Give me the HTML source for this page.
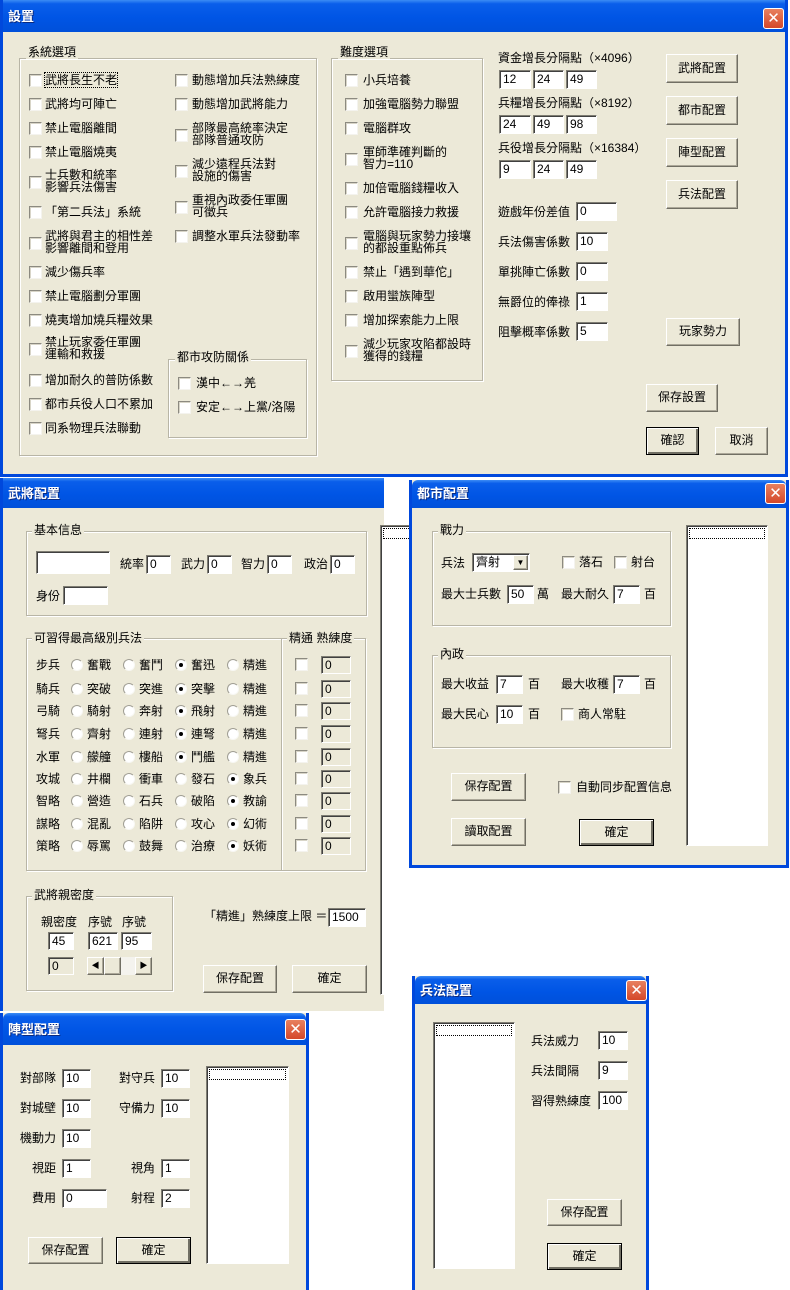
<!DOCTYPE html>
<html><head><meta charset="utf-8">
<style>
*{margin:0;padding:0;box-sizing:border-box}
body{width:790px;height:1290px;background:#fff;position:relative;overflow:hidden;font:12px "Liberation Sans","Noto Sans CJK TC","WenQuanYi Zen Hei",sans-serif;color:#000}
div,span{position:absolute}
.dlg{background:#ECE9D8;border:3px solid #0048DC;border-top:none}
.tb{left:0;right:0;top:0;background:linear-gradient(#3C8CF4 0,#0A5EEA 12%,#0055E5 55%,#0050DA 100%);color:#fff;font-weight:bold;font-size:13px;padding:0 0 0 5px;text-shadow:1px 1px #0A2A80}
.cl{width:21px;height:21px;background:linear-gradient(#E8805F,#D4482A);border:1px solid #fff;border-radius:3px;color:#fff;font:bold 15px/18px "DejaVu Sans",sans-serif;text-align:center}
.t{white-space:nowrap;line-height:14px}
.t2{white-space:nowrap;line-height:12px}
.cb{width:13px;height:13px;background:#fff;border:1px solid;border-color:#8C8A80 #F4F3EE #F4F3EE #8C8A80;box-shadow:inset 1px 1px #D8D5C8}
.in{height:19px;background:#fff;border:1px solid;border-color:#7F7D73 #fff #fff #7F7D73;box-shadow:inset 1px 1px #404040;font-size:12px;line-height:16px;padding-left:3px}
.dis{background:#ECE9D8}
.bt{background:#ECE9D8;border:1px solid;border-color:#fff #716F64 #716F64 #fff;box-shadow:inset -1px -1px #ACA899;text-align:center;line-height:25px}
.df{border:1px solid #000;box-shadow:inset 1px 1px #fff,inset -2px -2px #716F64}
.gb{border:1px solid #B8B5A6;box-shadow:1px 1px 0 #fff,inset 1px 1px 0 #fff}
.gl{background:#ECE9D8;padding:0 2px;line-height:14px;white-space:nowrap}
.rd{width:12px;height:12px;border-radius:50%;background:#fff;border:1px solid;border-color:#A09E94 #F8F8F4 #F8F8F4 #A09E94}
.rd.on::after{content:"";position:absolute;left:3px;top:3px;width:4px;height:4px;border-radius:50%;background:#000}
.lb{background:#fff;border:1px solid;border-color:#7F7D73 #fff #fff #7F7D73;box-shadow:inset 1px 1px #404040}
.lb::before{content:"";position:absolute;left:2px;right:2px;top:2px;height:9px;border:1px dotted #000}
</style></head><body>

<!-- 設置 -->
<div class="dlg" style="left:0;top:0;width:788px;height:477px">
<div class="tb" style="height:32px;line-height:34px">設置</div>
<div class="cl" style="left:760px;top:8px">✕</div>
</div>
<div class="gb" style="left:19px;top:58px;width:298px;height:398px"></div>
<span class="gl" style="left:26px;top:45px">系統選項</span>
<div class="cb" style="left:29px;top:74px"></div><span class="t" style="left:45px;top:73px;outline:1px dotted #000">武將長生不老</span>
<div class="cb" style="left:29px;top:98px"></div><span class="t" style="left:45px;top:97px">武將均可陣亡</span>
<div class="cb" style="left:29px;top:122px"></div><span class="t" style="left:45px;top:121px">禁止電腦離間</span>
<div class="cb" style="left:29px;top:146px"></div><span class="t" style="left:45px;top:145px">禁止電腦燒夷</span>
<div class="cb" style="left:29px;top:176px"></div><span class="t2" style="left:45px;top:169px">士兵數和統率<br>影響兵法傷害</span>
<div class="cb" style="left:29px;top:206px"></div><span class="t" style="left:45px;top:205px">「第二兵法」系統</span>
<div class="cb" style="left:29px;top:237px"></div><span class="t2" style="left:45px;top:230px">武將與君主的相性差<br>影響離間和登用</span>
<div class="cb" style="left:29px;top:266px"></div><span class="t" style="left:45px;top:265px">減少傷兵率</span>
<div class="cb" style="left:29px;top:290px"></div><span class="t" style="left:45px;top:289px">禁止電腦劃分軍團</span>
<div class="cb" style="left:29px;top:314px"></div><span class="t" style="left:45px;top:313px">燒夷增加燒兵糧效果</span>
<div class="cb" style="left:29px;top:343px"></div><span class="t2" style="left:45px;top:336px">禁止玩家委任軍團<br>運輸和救援</span>
<div class="cb" style="left:29px;top:374px"></div><span class="t" style="left:45px;top:373px">增加耐久的普防係數</span>
<div class="cb" style="left:29px;top:398px"></div><span class="t" style="left:45px;top:397px">都市兵役人口不累加</span>
<div class="cb" style="left:29px;top:422px"></div><span class="t" style="left:45px;top:421px">同系物理兵法聯動</span>

<div class="cb" style="left:175px;top:74px"></div><span class="t" style="left:192px;top:73px">動態增加兵法熟練度</span>
<div class="cb" style="left:175px;top:98px"></div><span class="t" style="left:192px;top:97px">動態增加武將能力</span>
<div class="cb" style="left:175px;top:129px"></div><span class="t2" style="left:192px;top:122px">部隊最高統率決定<br>部隊普通攻防</span>
<div class="cb" style="left:175px;top:165px"></div><span class="t2" style="left:192px;top:158px">減少遠程兵法對<br>設施的傷害</span>
<div class="cb" style="left:175px;top:201px"></div><span class="t2" style="left:192px;top:194px">重視內政委任軍團<br>可徵兵</span>
<div class="cb" style="left:175px;top:230px"></div><span class="t" style="left:192px;top:229px">調整水軍兵法發動率</span>

<div class="gb" style="left:168px;top:359px;width:139px;height:79px"></div>
<span class="gl" style="left:175px;top:350px">都市攻防關係</span>
<div class="cb" style="left:178px;top:377px"></div><span class="t" style="left:196px;top:376px">漢中←→羌</span>
<div class="cb" style="left:178px;top:401px"></div><span class="t" style="left:196px;top:400px">安定←→上黨/洛陽</span>

<div class="gb" style="left:331px;top:58px;width:152px;height:323px"></div>
<span class="gl" style="left:338px;top:45px">難度選項</span>
<div class="cb" style="left:345px;top:74px"></div><span class="t" style="left:363px;top:73px">小兵培養</span>
<div class="cb" style="left:345px;top:98px"></div><span class="t" style="left:363px;top:97px">加強電腦勢力聯盟</span>
<div class="cb" style="left:345px;top:122px"></div><span class="t" style="left:363px;top:121px">電腦群攻</span>
<div class="cb" style="left:345px;top:153px"></div><span class="t2" style="left:363px;top:146px">軍師準確判斷的<br>智力=110</span>
<div class="cb" style="left:345px;top:182px"></div><span class="t" style="left:363px;top:181px">加倍電腦錢糧收入</span>
<div class="cb" style="left:345px;top:206px"></div><span class="t" style="left:363px;top:205px">允許電腦接力救援</span>
<div class="cb" style="left:345px;top:237px"></div><span class="t2" style="left:363px;top:230px">電腦與玩家勢力接壤<br>的都設重點佈兵</span>
<div class="cb" style="left:345px;top:266px"></div><span class="t" style="left:363px;top:265px">禁止「遇到華佗」</span>
<div class="cb" style="left:345px;top:290px"></div><span class="t" style="left:363px;top:289px">啟用蠻族陣型</span>
<div class="cb" style="left:345px;top:314px"></div><span class="t" style="left:363px;top:313px">增加探索能力上限</span>
<div class="cb" style="left:345px;top:345px"></div><span class="t2" style="left:363px;top:338px">減少玩家攻陷都設時<br>獲得的錢糧</span>

<span class="t" style="left:498px;top:51px">資金增長分隔點（×4096）</span>
<div class="in" style="left:499px;top:70px;width:32px">12</div><div class="in" style="left:533px;top:70px;width:31px">24</div><div class="in" style="left:566px;top:70px;width:31px">49</div>
<span class="t" style="left:498px;top:96px">兵糧增長分隔點（×8192）</span>
<div class="in" style="left:499px;top:115px;width:32px">24</div><div class="in" style="left:533px;top:115px;width:31px">49</div><div class="in" style="left:566px;top:115px;width:31px">98</div>
<span class="t" style="left:498px;top:141px">兵役增長分隔點（×16384）</span>
<div class="in" style="left:499px;top:160px;width:32px">9</div><div class="in" style="left:533px;top:160px;width:31px">24</div><div class="in" style="left:566px;top:160px;width:31px">49</div>

<div class="bt" style="left:666px;top:54px;width:72px;height:29px;line-height:27px">武將配置</div>
<div class="bt" style="left:666px;top:96px;width:72px;height:29px;line-height:27px">都市配置</div>
<div class="bt" style="left:666px;top:138px;width:72px;height:29px;line-height:27px">陣型配置</div>
<div class="bt" style="left:666px;top:180px;width:72px;height:29px;line-height:27px">兵法配置</div>

<span class="t" style="left:498px;top:205px">遊戲年份差值</span><div class="in" style="left:576px;top:202px;width:41px">0</div>
<span class="t" style="left:498px;top:235px">兵法傷害係數</span><div class="in" style="left:576px;top:232px;width:32px">10</div>
<span class="t" style="left:498px;top:265px">單挑陣亡係數</span><div class="in" style="left:576px;top:262px;width:32px">0</div>
<span class="t" style="left:498px;top:295px">無爵位的俸祿</span><div class="in" style="left:576px;top:292px;width:32px">1</div>
<span class="t" style="left:498px;top:325px">阻擊概率係數</span><div class="in" style="left:576px;top:322px;width:32px">5</div>

<div class="bt" style="left:666px;top:318px;width:74px;height:28px">玩家勢力</div>
<div class="bt" style="left:646px;top:384px;width:72px;height:28px">保存設置</div>
<div class="bt df" style="left:646px;top:427px;width:53px;height:28px">確認</div>
<div class="bt" style="left:715px;top:427px;width:53px;height:28px">取消</div>

<!-- 武將配置 -->
<div class="dlg" style="left:0;top:478px;width:384px;height:533px;border-right:none;border-bottom:none">
<div class="tb" style="height:30px;line-height:32px">武將配置</div>
</div>
<div class="lb" style="left:380px;top:525px;width:40px;height:470px"></div>

<div class="gb" style="left:26px;top:531px;width:341px;height:85px"></div>
<span class="gl" style="left:32px;top:523px">基本信息</span>
<div class="in" style="left:36px;top:551px;width:74px;height:23px"></div>
<span class="t" style="left:120px;top:557px">統率</span><div class="in" style="left:146px;top:555px;width:25px">0</div>
<span class="t" style="left:181px;top:557px">武力</span><div class="in" style="left:207px;top:555px;width:25px">0</div>
<span class="t" style="left:241px;top:557px">智力</span><div class="in" style="left:267px;top:555px;width:25px">0</div>
<span class="t" style="left:304px;top:557px">政治</span><div class="in" style="left:330px;top:555px;width:25px">0</div>
<span class="t" style="left:36px;top:589px">身份</span><div class="in" style="left:63px;top:586px;width:45px"></div>

<div class="gb" style="left:26px;top:638px;width:256px;height:233px"></div>
<div class="gb" style="left:281px;top:638px;width:85px;height:233px"></div>
<span class="gl" style="left:32px;top:631px">可習得最高級別兵法</span>
<span class="gl" style="left:287px;top:631px">精通&nbsp;熟練度</span>

<div id="rows"></div>

<div class="gb" style="left:26px;top:896px;width:147px;height:95px"></div>
<span class="gl" style="left:32px;top:888px">武將親密度</span>
<span class="t" style="left:41px;top:915px">親密度</span><span class="t" style="left:88px;top:915px">序號</span><span class="t" style="left:122px;top:915px">序號</span>
<div class="in" style="left:48px;top:932px;width:26px;height:18px">45</div>
<div class="in" style="left:88px;top:932px;width:30px;height:18px">621</div>
<div class="in" style="left:121px;top:932px;width:31px;height:18px">95</div>
<div class="in dis" style="left:48px;top:957px;width:26px;height:18px">0</div>
<div style="left:87px;top:957px;width:65px;height:18px;background:#F4F3EE"></div>
<div class="bt" style="left:87px;top:957px;width:17px;height:18px;line-height:16px;font-size:8px">◀</div>
<div class="bt" style="left:104px;top:957px;width:17px;height:18px"></div>
<div class="bt" style="left:135px;top:957px;width:17px;height:18px;line-height:16px;font-size:8px">▶</div>
<span class="t" style="left:204px;top:909px">「精進」熟練度上限 ＝</span>
<div class="in" style="left:328px;top:908px;width:38px">1500</div>
<div class="bt" style="left:203px;top:965px;width:74px;height:28px">保存配置</div>
<div class="bt" style="left:292px;top:965px;width:75px;height:28px">確定</div>

<!-- 都市配置 -->
<div class="dlg" style="left:409px;top:480px;width:380px;height:388px;border-left:3px solid #0048DC">
<div class="tb" style="height:28px;line-height:28px;border-radius:6px 6px 0 0">都市配置</div>
<div class="cl" style="left:353px;top:3px">✕</div>
</div>
<div class="gb" style="left:432px;top:531px;width:239px;height:95px"></div>
<span class="gl" style="left:438px;top:523px">戰力</span>
<span class="t" style="left:441px;top:556px">兵法</span>
<div class="in" style="left:472px;top:553px;width:58px;height:19px">齊射</div>
<div class="bt" style="left:513px;top:555px;width:15px;height:15px;line-height:14px;font-size:8px">▼</div>
<div class="cb" style="left:562px;top:556px"></div><span class="t" style="left:579px;top:555px">落石</span>
<div class="cb" style="left:614px;top:556px"></div><span class="t" style="left:631px;top:555px">射台</span>
<span class="t" style="left:441px;top:587px">最大士兵數</span><div class="in" style="left:507px;top:585px;width:27px">50</div><span class="t" style="left:537px;top:587px">萬</span>
<span class="t" style="left:561px;top:587px">最大耐久</span><div class="in" style="left:613px;top:585px;width:27px">7</div><span class="t" style="left:644px;top:587px">百</span>

<div class="gb" style="left:432px;top:655px;width:239px;height:93px"></div>
<span class="gl" style="left:438px;top:647px">內政</span>
<span class="t" style="left:441px;top:677px">最大收益</span><div class="in" style="left:496px;top:675px;width:27px">7</div><span class="t" style="left:528px;top:677px">百</span>
<span class="t" style="left:561px;top:677px">最大收穫</span><div class="in" style="left:613px;top:675px;width:27px">7</div><span class="t" style="left:644px;top:677px">百</span>
<span class="t" style="left:441px;top:707px">最大民心</span><div class="in" style="left:496px;top:705px;width:27px">10</div><span class="t" style="left:528px;top:707px">百</span>
<div class="cb" style="left:561px;top:708px"></div><span class="t" style="left:578px;top:707px">商人常駐</span>

<div class="bt" style="left:451px;top:773px;width:75px;height:28px">保存配置</div>
<div class="cb" style="left:558px;top:781px"></div><span class="t" style="left:576px;top:780px">自動同步配置信息</span>
<div class="bt" style="left:451px;top:818px;width:75px;height:28px">讀取配置</div>
<div class="bt df" style="left:579px;top:819px;width:75px;height:27px">確定</div>
<div class="lb" style="left:686px;top:525px;width:82px;height:321px"></div>

<!-- 陣型配置 -->
<div class="dlg" style="left:0;top:1013px;width:309px;height:277px;border-bottom:none">
<div class="tb" style="height:32px;line-height:34px;border-radius:6px 6px 0 0">陣型配置</div>
<div class="cl" style="left:282px;top:6px">✕</div>
</div>
<span class="t" style="left:20px;top:1071px">對部隊</span><div class="in" style="left:62px;top:1069px;width:29px">10</div>
<span class="t" style="left:119px;top:1071px">對守兵</span><div class="in" style="left:161px;top:1069px;width:29px">10</div>
<span class="t" style="left:20px;top:1101px">對城壁</span><div class="in" style="left:62px;top:1099px;width:29px">10</div>
<span class="t" style="left:119px;top:1101px">守備力</span><div class="in" style="left:161px;top:1099px;width:29px">10</div>
<span class="t" style="left:20px;top:1131px">機動力</span><div class="in" style="left:62px;top:1129px;width:29px">10</div>
<span class="t" style="left:32px;top:1161px">視距</span><div class="in" style="left:62px;top:1159px;width:29px">1</div>
<span class="t" style="left:131px;top:1161px">視角</span><div class="in" style="left:161px;top:1159px;width:29px">1</div>
<span class="t" style="left:32px;top:1191px">費用</span><div class="in" style="left:62px;top:1189px;width:45px">0</div>
<span class="t" style="left:131px;top:1191px">射程</span><div class="in" style="left:161px;top:1189px;width:29px">2</div>
<div class="bt" style="left:28px;top:1237px;width:75px;height:27px">保存配置</div>
<div class="bt df" style="left:116px;top:1237px;width:75px;height:27px">確定</div>
<div class="lb" style="left:206px;top:1066px;width:83px;height:198px"></div>

<!-- 兵法配置 -->
<div class="dlg" style="left:412px;top:976px;width:237px;height:314px;border-bottom:none">
<div class="tb" style="height:28px;line-height:30px;border-radius:6px 6px 0 0">兵法配置</div>
<div class="cl" style="left:211px;top:4px">✕</div>
</div>
<div class="lb" style="left:433px;top:1022px;width:82px;height:247px"></div>
<span class="t" style="left:531px;top:1034px">兵法威力</span><div class="in" style="left:598px;top:1031px;width:30px">10</div>
<span class="t" style="left:531px;top:1064px">兵法間隔</span><div class="in" style="left:598px;top:1061px;width:30px">9</div>
<span class="t" style="left:531px;top:1094px">習得熟練度</span><div class="in" style="left:598px;top:1091px;width:30px">100</div>
<div class="bt" style="left:547px;top:1199px;width:75px;height:27px">保存配置</div>
<div class="bt df" style="left:547px;top:1243px;width:75px;height:27px">確定</div>

<!-- rows of 武將 -->
<span class="t" style="left:36px;top:658px">步兵</span><div class="rd" style="left:71px;top:659px"></div><span class="t" style="left:87px;top:658px">奮戰</span><div class="rd" style="left:123px;top:659px"></div><span class="t" style="left:139px;top:658px">奮鬥</span><div class="rd on" style="left:175px;top:659px"></div><span class="t" style="left:191px;top:658px">奮迅</span><div class="rd" style="left:227px;top:659px"></div><span class="t" style="left:243px;top:658px">精進</span><div class="cb" style="left:295px;top:658px"></div><div class="in dis" style="left:321px;top:656px;width:30px;height:18px">0</div>
<span class="t" style="left:36px;top:682px">騎兵</span><div class="rd" style="left:71px;top:683px"></div><span class="t" style="left:87px;top:682px">突破</span><div class="rd" style="left:123px;top:683px"></div><span class="t" style="left:139px;top:682px">突進</span><div class="rd on" style="left:175px;top:683px"></div><span class="t" style="left:191px;top:682px">突擊</span><div class="rd" style="left:227px;top:683px"></div><span class="t" style="left:243px;top:682px">精進</span><div class="cb" style="left:295px;top:682px"></div><div class="in dis" style="left:321px;top:680px;width:30px;height:18px">0</div>
<span class="t" style="left:36px;top:704px">弓騎</span><div class="rd" style="left:71px;top:705px"></div><span class="t" style="left:87px;top:704px">騎射</span><div class="rd" style="left:123px;top:705px"></div><span class="t" style="left:139px;top:704px">奔射</span><div class="rd on" style="left:175px;top:705px"></div><span class="t" style="left:191px;top:704px">飛射</span><div class="rd" style="left:227px;top:705px"></div><span class="t" style="left:243px;top:704px">精進</span><div class="cb" style="left:295px;top:704px"></div><div class="in dis" style="left:321px;top:702px;width:30px;height:18px">0</div>
<span class="t" style="left:36px;top:727px">弩兵</span><div class="rd" style="left:71px;top:728px"></div><span class="t" style="left:87px;top:727px">齊射</span><div class="rd" style="left:123px;top:728px"></div><span class="t" style="left:139px;top:727px">連射</span><div class="rd on" style="left:175px;top:728px"></div><span class="t" style="left:191px;top:727px">連弩</span><div class="rd" style="left:227px;top:728px"></div><span class="t" style="left:243px;top:727px">精進</span><div class="cb" style="left:295px;top:727px"></div><div class="in dis" style="left:321px;top:725px;width:30px;height:18px">0</div>
<span class="t" style="left:36px;top:750px">水軍</span><div class="rd" style="left:71px;top:751px"></div><span class="t" style="left:87px;top:750px">艨艟</span><div class="rd" style="left:123px;top:751px"></div><span class="t" style="left:139px;top:750px">樓船</span><div class="rd on" style="left:175px;top:751px"></div><span class="t" style="left:191px;top:750px">鬥艦</span><div class="rd" style="left:227px;top:751px"></div><span class="t" style="left:243px;top:750px">精進</span><div class="cb" style="left:295px;top:750px"></div><div class="in dis" style="left:321px;top:748px;width:30px;height:18px">0</div>
<span class="t" style="left:36px;top:772px">攻城</span><div class="rd" style="left:71px;top:773px"></div><span class="t" style="left:87px;top:772px">井欄</span><div class="rd" style="left:123px;top:773px"></div><span class="t" style="left:139px;top:772px">衝車</span><div class="rd" style="left:175px;top:773px"></div><span class="t" style="left:191px;top:772px">發石</span><div class="rd on" style="left:227px;top:773px"></div><span class="t" style="left:243px;top:772px">象兵</span><div class="cb" style="left:295px;top:772px"></div><div class="in dis" style="left:321px;top:770px;width:30px;height:18px">0</div>
<span class="t" style="left:36px;top:794px">智略</span><div class="rd" style="left:71px;top:795px"></div><span class="t" style="left:87px;top:794px">營造</span><div class="rd" style="left:123px;top:795px"></div><span class="t" style="left:139px;top:794px">石兵</span><div class="rd" style="left:175px;top:795px"></div><span class="t" style="left:191px;top:794px">破陷</span><div class="rd on" style="left:227px;top:795px"></div><span class="t" style="left:243px;top:794px">教諭</span><div class="cb" style="left:295px;top:794px"></div><div class="in dis" style="left:321px;top:792px;width:30px;height:18px">0</div>
<span class="t" style="left:36px;top:817px">謀略</span><div class="rd" style="left:71px;top:818px"></div><span class="t" style="left:87px;top:817px">混亂</span><div class="rd" style="left:123px;top:818px"></div><span class="t" style="left:139px;top:817px">陷阱</span><div class="rd" style="left:175px;top:818px"></div><span class="t" style="left:191px;top:817px">攻心</span><div class="rd on" style="left:227px;top:818px"></div><span class="t" style="left:243px;top:817px">幻術</span><div class="cb" style="left:295px;top:817px"></div><div class="in dis" style="left:321px;top:815px;width:30px;height:18px">0</div>
<span class="t" style="left:36px;top:839px">策略</span><div class="rd" style="left:71px;top:840px"></div><span class="t" style="left:87px;top:839px">辱罵</span><div class="rd" style="left:123px;top:840px"></div><span class="t" style="left:139px;top:839px">鼓舞</span><div class="rd" style="left:175px;top:840px"></div><span class="t" style="left:191px;top:839px">治療</span><div class="rd on" style="left:227px;top:840px"></div><span class="t" style="left:243px;top:839px">妖術</span><div class="cb" style="left:295px;top:839px"></div><div class="in dis" style="left:321px;top:837px;width:30px;height:18px">0</div>

</body></html>
